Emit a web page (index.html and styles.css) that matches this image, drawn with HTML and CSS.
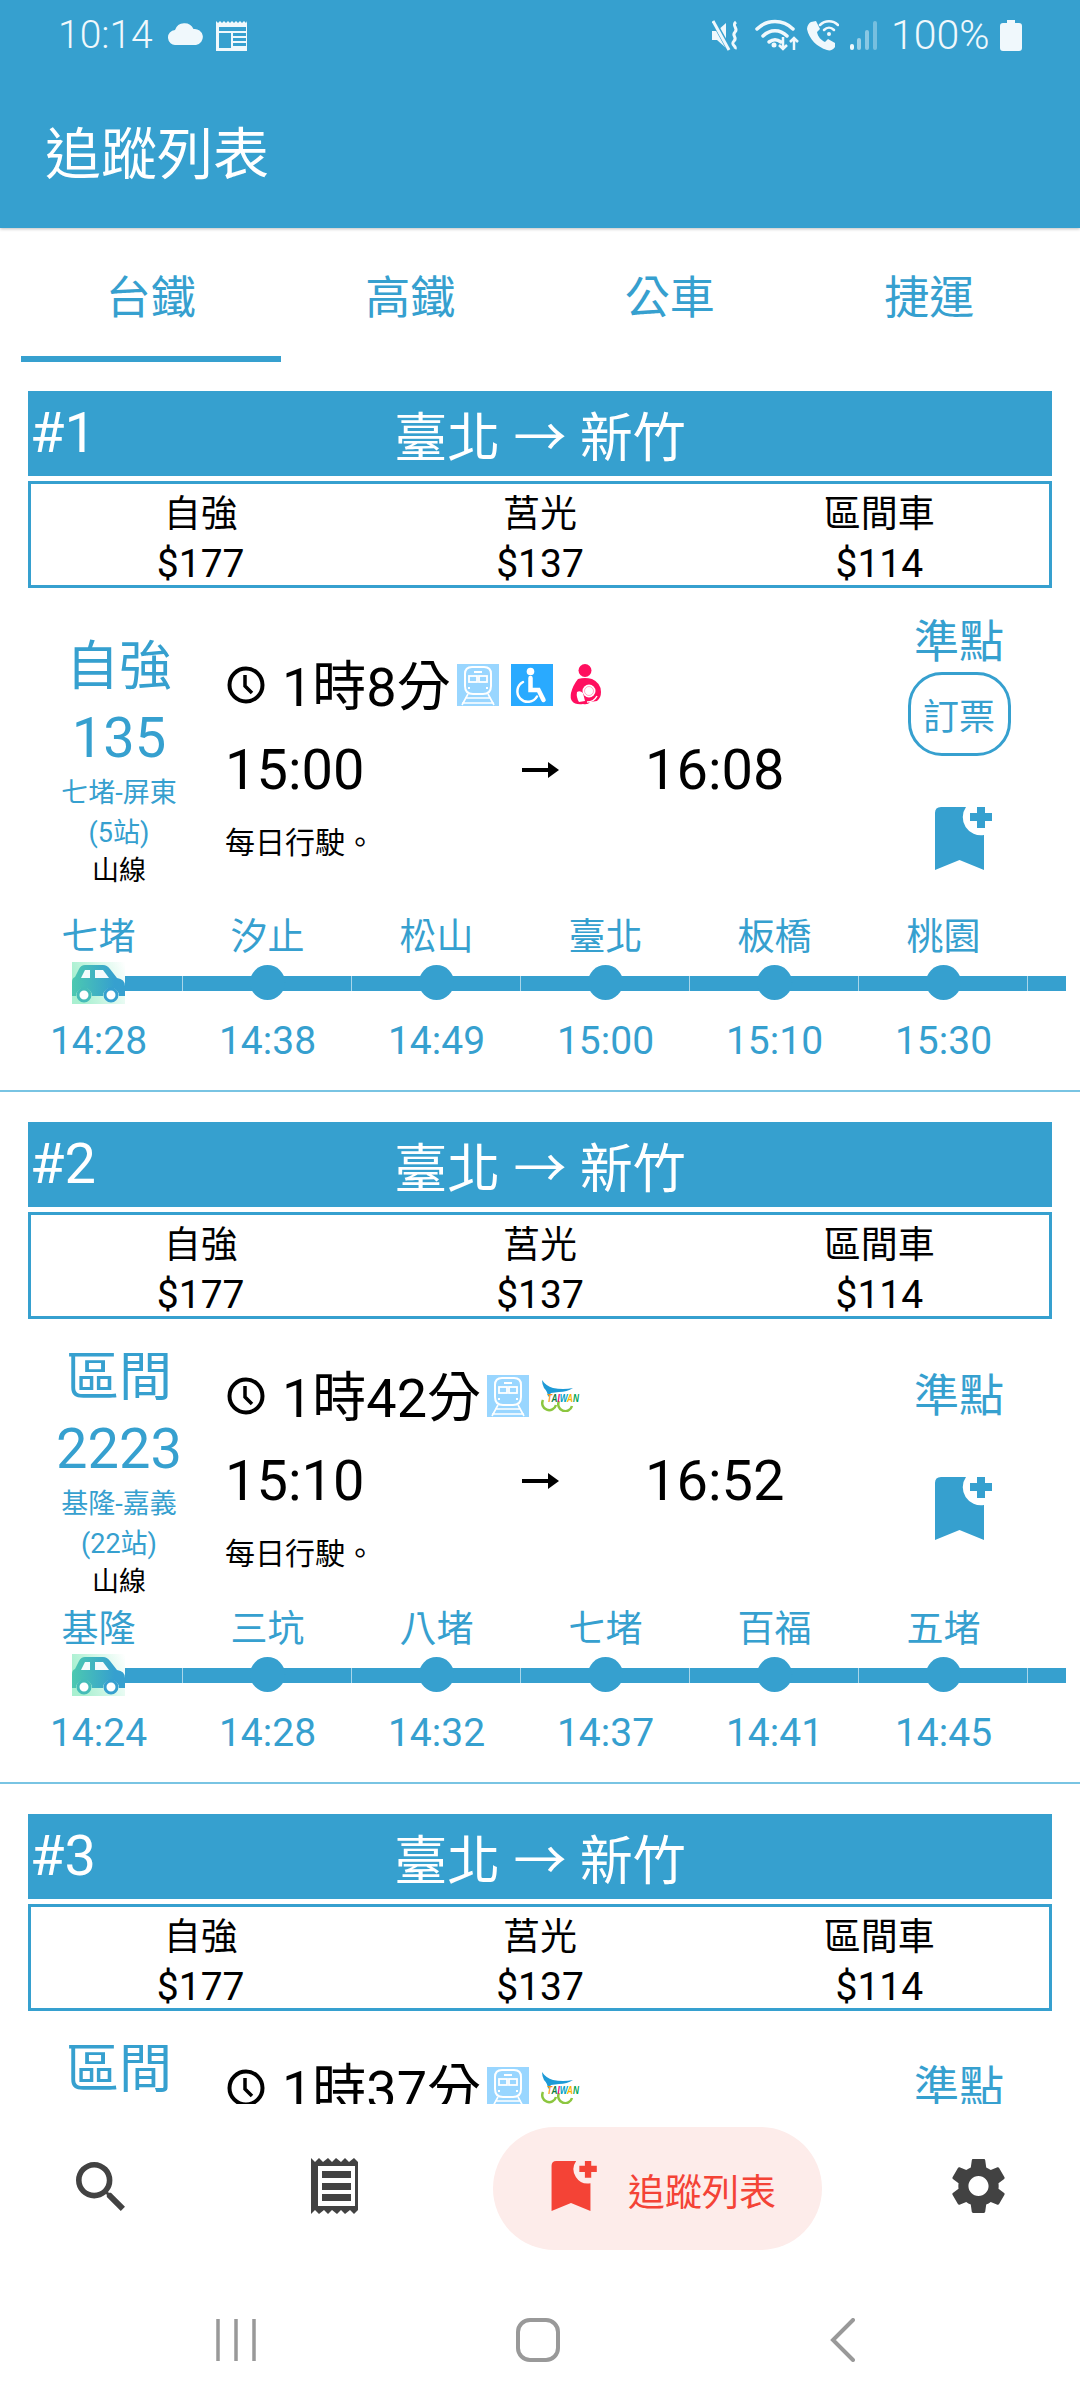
FILE: index.html
```html
<!DOCTYPE html>
<html lang="zh-TW">
<head>
  <meta charset="UTF-8" />
  <title>追蹤列表</title>
  <link rel="stylesheet" href="styles.css">
</head>
<body>
<div class="app">

  <!-- 上方標題 -->
  <header class="appbar">
    <div class="status">
      <span class="clock-text">10:14</span>
      <svg class="st-cloud" viewBox="0 0 36 22"><path fill="#f0f8fc" d="M8 22a7.5 7.5 0 0 1-1-15A10 10 0 0 1 25.500 6 8 8 0 0 1 28 22z"/></svg>
      <svg class="st-news" viewBox="0 0 33 30"><path fill="#f0f8fc" d="M0 30V0l2 2 2-2 2 2 2-2 2 2 2-2 2 2 2-2 2 2 2-2 2 2 2-2 2 2 2-2 2 2 1-2v30z"/><path fill="#36a0cf" d="M3 6h27v4H3zM3 12h12v15H3zM17 12h13v3H17zM17 17h13v3H17zM17 22h13v3H17z"/></svg>
      <span class="status-space"></span>
      <svg class="st-mute" viewBox="0 0 28 31"><path fill="#f0f8fc" d="M0 11h5l9-8v25l-9-8H0z"/><path stroke="#36a0cf" stroke-width="5" d="M1 0l17 31"/><path stroke="#f0f8fc" stroke-width="3" d="M1 1l16 29"/><path fill="none" stroke="#f0f8fc" stroke-width="3" d="M24 2c-5 4 3 6-1 10s3 5-1 9 3 5 1 8"/></svg>
      <svg class="st-wifi" viewBox="0 0 44 32"><g fill="none" stroke="#f0f8fc" stroke-width="3.500" stroke-linecap="round"><path d="M2 10c10-10 26-10 36 0"/><path d="M8 17c7-7 17-7 24 0"/><path d="M14 23c4-3 8-3 12 0"/></g><circle cx="19" cy="26" r="2.500" fill="#f0f8fc"/><path fill="none" stroke="#f0f8fc" stroke-width="2.500" d="M28 18v12M24 26l4 4 4-4M39 31V19M35 23l4-4 4 4"/></svg>
      <svg class="st-call" viewBox="0 0 33 31"><path fill="#f0f8fc" d="M5 2l5-1 4 8-3 3c1 5 4 8 8 10l3-3 7 4v4c-2 3-5 4-8 3C11 27 3 19 1 9c0-3 2-6 4-7z"/><g fill="none" stroke="#f0f8fc" stroke-width="2.500" stroke-linecap="round"><path d="M14 5c5-5 13-5 18 0"/><path d="M18 10c3-3 7-3 10 0"/></g><circle cx="23" cy="14" r="2" fill="#f0f8fc"/></svg>
      <svg class="st-signal" viewBox="0 0 27 29"><g fill="#f0f8fc"><rect x="0" y="23" width="4" height="6" rx="2"/><rect x="7" y="17" width="4" height="12" rx="2" opacity=".55"/><rect x="15" y="9" width="4" height="20" rx="2" opacity=".45"/><rect x="23" y="0" width="4" height="29" rx="2" opacity=".35"/></g></svg>
      <span class="battery-text">100%</span>
      <svg class="st-battery" viewBox="0 0 22 31"><path fill="#f0f8fc" d="M7 0h8v3h4q3 0 3 3v22q0 3-3 3H3q-3 0-3-3V6q0-3 3-3h4z"/></svg>
    </div>
    <div class="appbar-title">追蹤列表</div>
  </header>

  <!-- 分頁 -->
  <nav class="tabs">
    <div class="tab tab-on">台鐵</div>
    <div class="tab">高鐵</div>
    <div class="tab">公車</div>
    <div class="tab">捷運</div>
  </nav>

  <main class="list">

    <!-- 第一筆 -->
    <section class="card">
      <div class="route-head">
        <span class="route-no">#1</span>
        <span class="route-name">臺北 → 新竹</span>
      </div>
      <div class="fares">
        <div class="fare"><span>自強</span><span class="fare-price">$177</span></div>
        <div class="fare"><span>莒光</span><span class="fare-price">$137</span></div>
        <div class="fare"><span>區間車</span><span class="fare-price">$114</span></div>
      </div>
      <div class="trip">
        <div class="train">
          <div class="train-name">自強</div>
          <div class="train-no">135</div>
          <div class="train-route">七堵-屏東<br>(5站)</div>
          <div class="train-line">山線</div>
        </div>
        <div class="info">
          <div class="duration">
            <svg class="clock" viewBox="0 0 38 38"><circle cx="19" cy="19" r="16.500" fill="none" stroke="#000" stroke-width="4"/><path fill="none" stroke="#000" stroke-width="3.500" d="M18 9v11l7 7"/></svg>
            <span class="duration-text">1時8分</span>
            <svg class="perk" viewBox="0 0 42 42"><use href="#i-train"/></svg>
            <svg class="perk perk-wheel" viewBox="0 0 42 42"><use href="#i-wheel"/></svg>
            <svg class="perk-mom" viewBox="0 0 32 41"><use href="#i-mom"/></svg>
          </div>
          <div class="times">
            <span>15:00</span>
            <svg class="times-arrow" viewBox="0 0 37 16"><path d="M0 6h26V0l11 8-11 8v-6H0z"/></svg>
            <span>16:08</span>
          </div>
          <div class="remark">每日行駛。</div>
        </div>
        <div class="side">
          <div class="ontime">準點</div>
          <div class="book">訂票</div>
          <svg class="mark" viewBox="0 0 49 63"><use href="#i-mark"/></svg>
        </div>
      </div>
      <div class="line">
        <div class="stop stop-first"><div class="stop-name">七堵</div><div class="stop-track"><span class="bar"></span><svg class="car" viewBox="0 0 53 42"><use href="#i-car"/></svg></div><div class="stop-time">14:28</div></div>
        <div class="stop"><div class="stop-name">汐止</div><div class="stop-track"><span class="bar"></span><span class="dot"></span></div><div class="stop-time">14:38</div></div>
        <div class="stop"><div class="stop-name">松山</div><div class="stop-track"><span class="bar"></span><span class="dot"></span></div><div class="stop-time">14:49</div></div>
        <div class="stop"><div class="stop-name">臺北</div><div class="stop-track"><span class="bar"></span><span class="dot"></span></div><div class="stop-time">15:00</div></div>
        <div class="stop"><div class="stop-name">板橋</div><div class="stop-track"><span class="bar"></span><span class="dot"></span></div><div class="stop-time">15:10</div></div>
        <div class="stop"><div class="stop-name">桃園</div><div class="stop-track"><span class="bar"></span><span class="dot"></span></div><div class="stop-time">15:30</div></div>
        <div class="stop"><div class="stop-name">中壢</div><div class="stop-track"><span class="bar"></span><span class="dot"></span></div><div class="stop-time">15:45</div></div>
      </div>
    </section>

    <!-- 第二筆 -->
    <section class="card">
      <div class="route-head">
        <span class="route-no">#2</span>
        <span class="route-name">臺北 → 新竹</span>
      </div>
      <div class="fares">
        <div class="fare"><span>自強</span><span class="fare-price">$177</span></div>
        <div class="fare"><span>莒光</span><span class="fare-price">$137</span></div>
        <div class="fare"><span>區間車</span><span class="fare-price">$114</span></div>
      </div>
      <div class="trip">
        <div class="train">
          <div class="train-name">區間</div>
          <div class="train-no">2223</div>
          <div class="train-route">基隆-嘉義<br>(22站)</div>
          <div class="train-line">山線</div>
        </div>
        <div class="info">
          <div class="duration">
            <svg class="clock" viewBox="0 0 38 38"><circle cx="19" cy="19" r="16.500" fill="none" stroke="#000" stroke-width="4"/><path fill="none" stroke="#000" stroke-width="3.500" d="M18 9v11l7 7"/></svg>
            <span class="duration-text">1時42分</span>
            <svg class="perk" viewBox="0 0 42 42"><use href="#i-train"/></svg>
            <svg class="perk-logo" viewBox="0 0 40 32"><use href="#i-taiwan"/></svg>
          </div>
          <div class="times">
            <span>15:10</span>
            <svg class="times-arrow" viewBox="0 0 37 16"><path d="M0 6h26V0l11 8-11 8v-6H0z"/></svg>
            <span>16:52</span>
          </div>
          <div class="remark">每日行駛。</div>
        </div>
        <div class="side">
          <div class="ontime">準點</div>
          <svg class="mark" viewBox="0 0 49 63"><use href="#i-mark"/></svg>
        </div>
      </div>
      <div class="line">
        <div class="stop stop-first"><div class="stop-name">基隆</div><div class="stop-track"><span class="bar"></span><svg class="car" viewBox="0 0 53 42"><use href="#i-car"/></svg></div><div class="stop-time">14:24</div></div>
        <div class="stop"><div class="stop-name">三坑</div><div class="stop-track"><span class="bar"></span><span class="dot"></span></div><div class="stop-time">14:28</div></div>
        <div class="stop"><div class="stop-name">八堵</div><div class="stop-track"><span class="bar"></span><span class="dot"></span></div><div class="stop-time">14:32</div></div>
        <div class="stop"><div class="stop-name">七堵</div><div class="stop-track"><span class="bar"></span><span class="dot"></span></div><div class="stop-time">14:37</div></div>
        <div class="stop"><div class="stop-name">百福</div><div class="stop-track"><span class="bar"></span><span class="dot"></span></div><div class="stop-time">14:41</div></div>
        <div class="stop"><div class="stop-name">五堵</div><div class="stop-track"><span class="bar"></span><span class="dot"></span></div><div class="stop-time">14:45</div></div>
        <div class="stop"><div class="stop-name">汐止</div><div class="stop-track"><span class="bar"></span><span class="dot"></span></div><div class="stop-time">14:49</div></div>
      </div>
    </section>

    <!-- 第三筆，下半部被底部選單蓋住 -->
    <section class="card">
      <div class="route-head">
        <span class="route-no">#3</span>
        <span class="route-name">臺北 → 新竹</span>
      </div>
      <div class="fares">
        <div class="fare"><span>自強</span><span class="fare-price">$177</span></div>
        <div class="fare"><span>莒光</span><span class="fare-price">$137</span></div>
        <div class="fare"><span>區間車</span><span class="fare-price">$114</span></div>
      </div>
      <div class="trip">
        <div class="train">
          <div class="train-name">區間</div>
        </div>
        <div class="info">
          <div class="duration">
            <svg class="clock" viewBox="0 0 38 38"><circle cx="19" cy="19" r="16.500" fill="none" stroke="#000" stroke-width="4"/><path fill="none" stroke="#000" stroke-width="3.500" d="M18 9v11l7 7"/></svg>
            <span class="duration-text">1時37分</span>
            <svg class="perk" viewBox="0 0 42 42"><use href="#i-train"/></svg>
            <svg class="perk-logo" viewBox="0 0 40 32"><use href="#i-taiwan"/></svg>
          </div>
          <div class="times"></div>
          <div class="remark"></div>
        </div>
        <div class="side">
          <div class="ontime">準點</div>
          <svg class="mark" viewBox="0 0 49 63"><use href="#i-mark"/></svg>
        </div>
      </div>
    </section>
  </main>

  <!-- 底部選單 -->
  <nav class="bottom">
    <svg class="nav-search" viewBox="3 3 17.500 17.500"><path fill="#424242" d="M15.500 14h-.79l-.28-.27A6.471 6.471 0 0 0 16 9.500 6.500 6.500 0 1 0 9.500 16c1.610 0 3.090-.59 4.230-1.570l.27.28v.79l5 4.990L20.490 19l-4.990-5zm-6 0C7.010 14 5 11.990 5 9.500S7.010 5 9.500 5 14 7.010 14 9.500 11.990 14 9.500 14z"/></svg>
    <svg class="nav-receipt" viewBox="0 0 51 56"><path fill="#424242" d="M0 0l4 4 4-4 4 4 5-4 4 4 4-4 5 4 4-4 4 4 5-4 4 4V52l-4 4-4-4-5 4-4-4-4 4-5-4-4 4-4-4-5 4-4-4-4 4z"/><path fill="#fff" d="M7 8h37v40H7z"/><path fill="#424242" d="M11 13h29v7H11zM11 25h29v7H11zM11 36h29v7H11z"/></svg>
    <div class="nav-pill">
      <svg class="nav-mark" viewBox="0 0 49 63"><use href="#i-mark"/></svg>
      <span>追蹤列表</span>
    </div>
    <svg class="nav-gear" viewBox="2.600 2 18.800 20"><path fill="#424242" d="M19.140 12.940c.04-.3.06-.61.06-.94 0-.32-.02-.64-.07-.94l2.030-1.580c.18-.14.23-.41.12-.61l-1.920-3.320c-.12-.22-.37-.29-.59-.22l-2.390.96c-.5-.38-1.030-.7-1.620-.94l-.36-2.540c-.04-.24-.24-.41-.48-.41h-3.840c-.24 0-.43.17-.47.41l-.36 2.540c-.59.24-1.130.57-1.620.94l-2.390-.96c-.22-.08-.47 0-.59.22L2.740 8.870c-.12.21-.08.47.12.61l2.030 1.580c-.05.3-.09.63-.09.94s.02.64.07.94l-2.030 1.580c-.18.14-.23.41-.12.61l1.920 3.320c.12.22.37.29.59.22l2.390-.96c.5.38 1.030.7 1.620.94l.36 2.540c.05.24.24.41.48.41h3.840c.24 0 .44-.17.47-.41l.36-2.540c.59-.24 1.130-.56 1.620-.94l2.390.96c.22.08.47 0 .59-.22l1.920-3.320c.12-.22.07-.47-.12-.61l-2.010-1.580zM12 15.600c-1.980 0-3.600-1.620-3.600-3.600s1.620-3.600 3.600-3.600 3.600 1.620 3.600 3.600-1.620 3.600-3.600 3.600z"/></svg>
  </nav>

  <!-- 系統按鍵 -->
  <div class="sysbar">
    <svg class="sys-recent" viewBox="0 0 40 44"><path stroke="#999" stroke-width="3.500" d="M2 1v42M20 1v42M38 1v42"/></svg>
    <svg class="sys-home" viewBox="0 0 44 44"><rect x="2" y="2" width="40" height="40" rx="12" fill="none" stroke="#999" stroke-width="4"/></svg>
    <svg class="sys-back" viewBox="0 0 25 44"><path fill="none" stroke="#999" stroke-width="4" stroke-linecap="round" d="M23 2L3 22l20 20"/></svg>
  </div>
</div>

<!-- 共用圖示 -->
<svg class="defs" width="0" height="0">
  <defs>
    <g id="i-train">
      <rect width="42" height="42" fill="#99d6ff"/>
      <g fill="none" stroke="#fff" stroke-width="1.800">
        <path d="M15 3h12q7 0 7 7v12q0 8-8 8H16q-8 0-8-8V10q0-7 7-7z" stroke-width="2"/>
        <rect x="12" y="12" width="8" height="6"/><rect x="22" y="12" width="8" height="6"/>
        <path d="M17 8h8M11 24h2M29 24h2"/>
        <path d="M11 30L5 41M31 30l6 11M8 34h26M5 39h32" stroke-width="1.600"/>
      </g>
    </g>
    <g id="i-wheel">
      <rect width="42" height="42" fill="#29aaff"/>
      <circle cx="19.500" cy="7.500" r="3.800" fill="#fff"/>
      <g fill="none" stroke="#fff" stroke-linecap="round">
        <path d="M19.500 14v12h8l5 10" stroke-width="4.500"/>
        <path d="M12 18a10.500 10.500 0 1 0 14 14.500" stroke-width="2.500"/>
      </g>
    </g>
    <g id="i-mom">
      <circle cx="15" cy="6.500" r="6.500" fill="#ff0f5f"/>
      <path fill="#ff0f5f" d="M8 15q7-2 14 0 9 4 9 13 0 6-4 9l-7 1q-2 3-7 2-8 1-11-3-2-3-1-8 2-8 7-14z"/>
      <circle cx="19" cy="27" r="6.500" fill="#fff"/>
      <circle cx="19" cy="27" r="4.500" fill="none" stroke="#ff0f5f" stroke-width="1" opacity=".35"/>
      <path fill="#fff" d="M7 28q3-2 6 1l2 8-6 1q-3-5-2-10z"/>
      <path fill="none" stroke="#fff" stroke-width="1.500" d="M17 38q7 0 10-6"/>
    </g>
    <g id="i-taiwan">
      <path fill="#1e9ad6" d="M1 0q4 6 11 8 10 2 20 0-6 4-14 4l-8 1-3 4q0-5-4-9Q1 4 1 0z"/>
      <g fill="none" stroke="#8cc63f" stroke-width="2.500">
        <path d="M2 20a7 7 0 1 0 13 5"/>
        <path d="M18 21a7 7 0 1 0 13 5"/>
      </g>
      <text x="6" y="22" class="logo-text" textLength="32" lengthAdjust="spacingAndGlyphs"><tspan fill="#f7931e">T</tspan><tspan fill="#0a7d3e">A</tspan><tspan fill="#e6007e">I</tspan><tspan fill="#00a0c6">W</tspan><tspan fill="#f7b500">A</tspan><tspan fill="#00a651">N</tspan></text>
    </g>
    <g id="i-mark">
      <path fill="currentColor" d="M6 0h25a18 18 0 0 0 18 28v35L24.500 53 0 63V6q0-6 6-6z"/>
      <path fill="currentColor" d="M42 0h8v6h7v8h-7v7h-8v-7h-7V6h7z"/>
    </g>
    <g id="i-car">
      <linearGradient id="car-bg" x1="0" x2="1" y1="0.300" y2="0"><stop offset="0" stop-color="#a8f0d0"/><stop offset="1" stop-color="#ffffff"/></linearGradient>
      <linearGradient id="car-fg" x1="0" x2="1" y1="0" y2="0"><stop offset="0" stop-color="#4cc9b0"/><stop offset=".8" stop-color="#36a0cf"/></linearGradient>
      <rect width="53" height="42" fill="url(#car-bg)"/>
      <path fill="url(#car-fg)" d="M13 3h18q4 0 7 4l7 9q8 1 8 8v10h-6a8 8 0 0 0-16 0H20a8 8 0 0 0-16 0H0V20q0-4 3-5l4-8q2-4 6-4z"/>
      <path fill="#fff" d="M13 8h5v8H9zM23 8h8l6 8H23z" opacity=".95"/>
      <circle cx="12" cy="33" r="6" fill="#fff" stroke="#45bcb8" stroke-width="3"/>
      <circle cx="39" cy="33" r="6" fill="#fff" stroke="#36a0cf" stroke-width="3"/>
    </g>
  </defs>
</svg>
</body>
</html>
```
FILE: styles.css
```css
* {
  box-sizing: border-box;
}

body {
  margin: 0;
  background: #fff;
  font-family: Roboto, "Noto Sans CJK TC", sans-serif;
  color: #000;
}

.app {
  width: 1080px;
  height: 2408px;
  display: flex;
  flex-direction: column;
  overflow: hidden;
}

.defs {
  display: block;
  height: 0;
}

/* 上方標題 */
.appbar {
  height: 228px;
  flex: none;
  background: #36a0cf;
  color: #f0f8fc;
  box-shadow: 0 1px 3px rgba(0, 0, 0, 0.25);
  position: relative;
}

.status {
  height: 70px;
  display: flex;
  align-items: center;
  padding: 0 58px 0 58px;
  font-weight: 300;
}

.clock-text {
  font-size: 39px;
  width: 110px;
}

.status-space {
  flex: 1;
}

.st-cloud {
  width: 36px;
  height: 22px;
  margin-top: -2px;
}

.st-news {
  width: 33px;
  height: 30px;
  margin: 2px 0 0 12px;
}

.st-mute {
  width: 28px;
  height: 31px;
}

.st-wifi {
  width: 44px;
  height: 32px;
  margin-left: 15px;
}

.st-call {
  width: 33px;
  height: 31px;
  margin-left: 7px;
}

.st-signal {
  width: 27px;
  height: 29px;
  margin-left: 11px;
}

.battery-text {
  font-size: 41px;
  margin-left: 14px;
  width: 109px;
}

.st-battery {
  width: 22px;
  height: 31px;
}

.appbar-title {
  font-size: 56px;
  line-height: 70px;
  padding: 50px 0 0 45px;
  color: #fff;
}

/* 分頁 */
.tabs {
  height: 134px;
  flex: none;
  display: flex;
  padding: 0 21px;
}

.tab {
  flex: 1;
  display: flex;
  align-items: center;
  justify-content: center;
  padding-bottom: 2px;
  font-size: 45px;
  color: #36a0cf;
}

.tab-on {
  box-shadow: inset 0 -6px 0 #36a0cf;
}

/* 清單 */
.list {
  flex: 1;
  min-height: 0;
  overflow: hidden;
}

.card {
  padding-top: 29px;
  padding-bottom: 15px;
  border-bottom: 2px solid #79c4e3;
}

.card + .card {
  padding-top: 30px;
}

.route-head {
  margin: 0 28px;
  height: 85px;
  background: #36a0cf;
  color: #fff;
  display: grid;
  grid-template-columns: 1fr auto 1fr;
  align-items: center;
}

.route-no {
  font-size: 56px;
  padding-left: 2px;
  margin-top: -2px;
}

.route-name {
  font-size: 53px;
}

.fares {
  margin: 5px 28px 0;
  height: 107px;
  border: 3px solid #36a0cf;
  display: grid;
  grid-template-columns: repeat(3, 1fr);
}

.fare {
  display: flex;
  flex-direction: column;
  align-items: center;
  padding-top: 9px;
  font-size: 37px;
  line-height: 44px;
}

.fare-price {
  font-size: 39px;
  line-height: 48px;
  margin-top: 3px;
}

/* 班次 */
.trip {
  display: flex;
  align-items: center;
  padding: 29px 28px 7px;
}

.train {
  width: 182px;
  flex: none;
  min-height: 252px;
  align-self: flex-start;
  text-align: center;
  color: #36a0cf;
}

.trip:has(.book) .train {
  align-self: center;
}

.train-name {
  font-size: 53px;
  line-height: 60px;
}

.train-no {
  font-size: 56px;
  line-height: 64px;
  margin-top: 9px;
}

.train-route {
  font-size: 27px;
  line-height: 40px;
  margin-top: 3px;
}

.train-line {
  font-size: 27px;
  line-height: 36px;
  color: #000;
}

.info {
  width: 629px;
  flex: none;
  margin-left: 15px;
  padding-bottom: 8px;
}

.duration {
  height: 60px;
  display: flex;
  align-items: center;
}

.duration-text {
  font-size: 54px;
  line-height: 60px;
  margin: 6px 6px 0 0;
}

.clock {
  width: 38px;
  height: 38px;
  margin: 0 17px 0 2px;
}

.perk {
  width: 42px;
  height: 42px;
}

.perk-wheel {
  margin-left: 12px;
}

.perk-mom {
  width: 32px;
  height: 41px;
  margin-left: 17px;
}

.perk-logo {
  width: 40px;
  height: 32px;
  margin-left: 12px;
}

.logo-text {
  font-family: "Liberation Sans", sans-serif;
  font-size: 10px;
  font-weight: 700;
  font-style: italic;
}

.times {
  height: 108px;
  display: grid;
  grid-template-columns: repeat(3, 210px);
  align-items: center;
  padding-top: 2px;
  font-size: 56px;
}

.times-arrow {
  width: 37px;
  height: 16px;
  justify-self: center;
}

.remark {
  min-height: 40px;
  font-size: 30px;
  line-height: 40px;
}

.side {
  flex: 1;
  display: flex;
  flex-direction: column;
  align-items: center;
  color: #36a0cf;
  margin-right: -12px;
}

.ontime {
  height: 48px;
  font-size: 45px;
  line-height: 52px;
  margin-bottom: 7px;
}

.book {
  width: 103px;
  height: 84px;
  border: 3px solid #36a0cf;
  border-radius: 34px;
  display: flex;
  align-items: center;
  justify-content: center;
  font-size: 36px;
}

.mark {
  width: 49px;
  height: 63px;
  margin: 51px 0 38px;
  overflow: visible;
}

/* 路線 */
.line {
  display: flex;
  margin-left: 14px;
  width: 1052px;
  overflow: hidden;
  color: #36a0cf;
}

.stop {
  width: 169px;
  flex: none;
  text-align: center;
}

.stop-name {
  height: 44px;
  font-size: 37px;
  line-height: 46px;
}

.stop-track {
  height: 48px;
  display: flex;
  align-items: center;
  position: relative;
}

.bar {
  width: 100%;
  height: 15px;
  background: #36a0cf;
  border-right: 1px solid #a9d6ea;
}

.stop-first .bar {
  width: 50%;
  margin-left: 50%;
}

.dot {
  position: absolute;
  left: 67px;
  top: 6px;
  width: 35px;
  height: 35px;
  border-radius: 50%;
  background: #36a0cf;
}

.car {
  position: absolute;
  left: 58px;
  top: 3px;
  width: 53px;
  height: 42px;
}

.stop-time {
  font-size: 39px;
  line-height: 68px;
}

/* 底部選單 */
.bottom {
  height: 168px;
  flex: none;
  background: #fff;
  display: flex;
  align-items: center;
  padding: 0 0 0 76px;
}

.nav-search {
  width: 49px;
  height: 49px;
  margin-top: -4px;
}

.nav-receipt {
  width: 51px;
  height: 56px;
  margin-left: 186px;
  margin-top: -4px;
}

.nav-pill {
  width: 329px;
  height: 123px;
  margin-left: 131px;
  border-radius: 62px;
  background: #fdecea;
  color: #f44336;
  display: flex;
  align-items: center;
  padding-left: 58px;
  font-size: 37px;
}

.nav-pill span {
  margin-left: 37px;
  margin-top: 4px;
}

.nav-mark {
  width: 40px;
  height: 50px;
  overflow: visible;
  margin-top: -4px;
}

.nav-gear {
  width: 53px;
  height: 56px;
  margin-left: 130px;
  margin-top: -4px;
}

/* 系統按鍵 */
.sysbar {
  height: 136px;
  flex: none;
  display: flex;
  align-items: flex-start;
  padding: 46px 0 0 216px;
}

.sys-recent {
  width: 40px;
  height: 44px;
}

.sys-home {
  width: 44px;
  height: 44px;
  margin-left: 260px;
}

.sys-back {
  width: 25px;
  height: 44px;
  margin-left: 270px;
}
```
